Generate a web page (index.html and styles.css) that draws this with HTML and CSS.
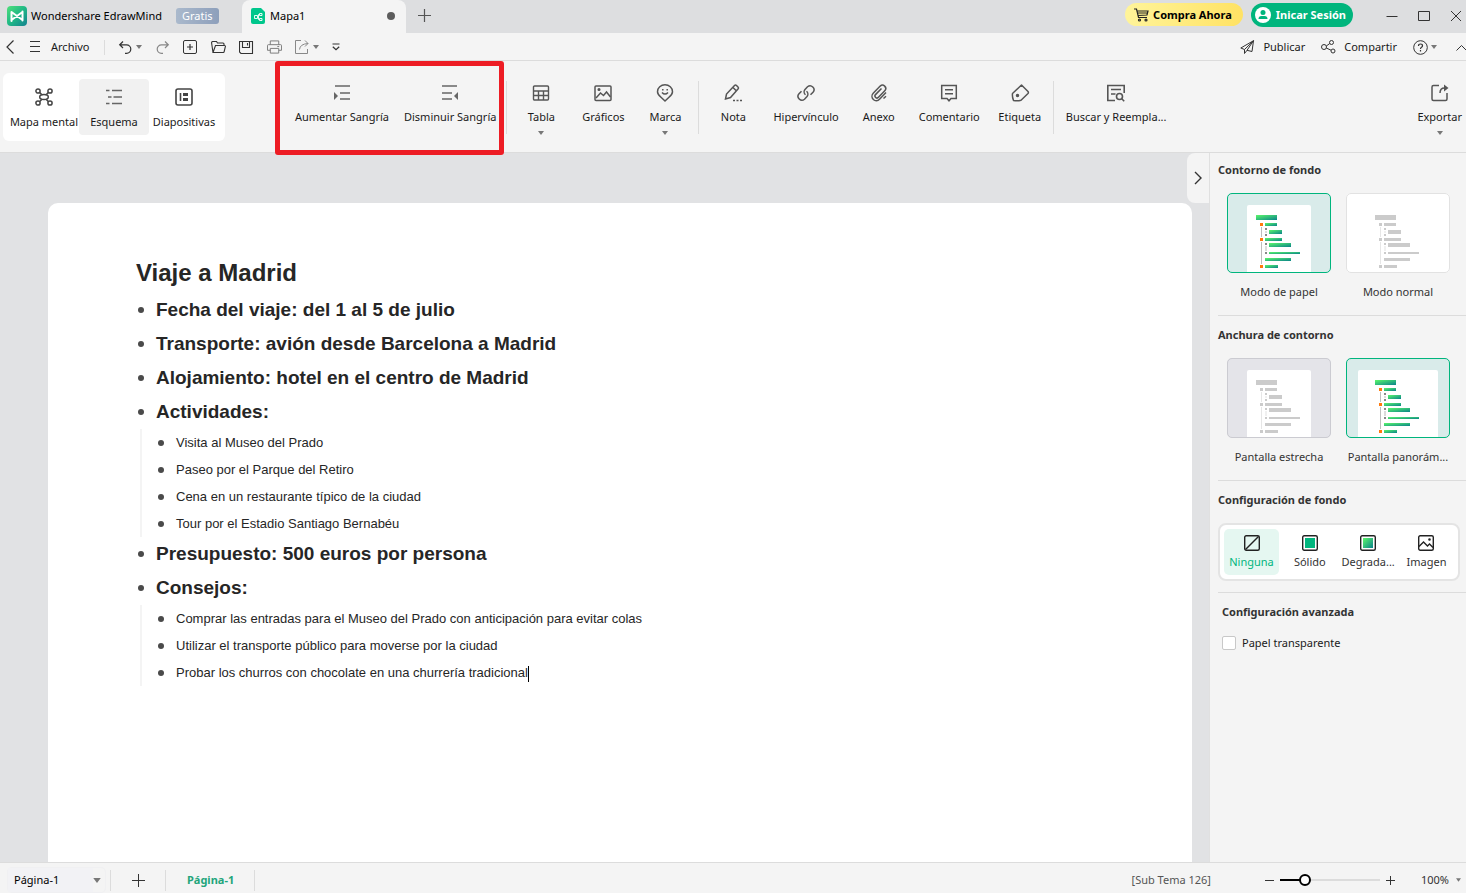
FILE: index.html
```html
<!DOCTYPE html>
<html lang="es">
<head>
<meta charset="utf-8">
<title>Wondershare EdrawMind</title>
<link rel="stylesheet" href="styles.css">
</head>
<body>
<svg class="defs" aria-hidden="true">
  <defs>
    <linearGradient id="green" x1="0" y1="0" x2="1" y2="1"><stop offset="0" stop-color="#5cf86a"/><stop offset="1" stop-color="#08838a"/></linearGradient>
    <linearGradient id="brand" x1="0" y1="0" x2="1" y2="1"><stop offset="0" stop-color="#4fe07a"/><stop offset=".5" stop-color="#1fb886"/><stop offset="1" stop-color="#12808f"/></linearGradient>
    <symbol id="outline-color" viewBox="0 0 104 80">
      <g fill="#bdbdbd"><path d="M34 34h1v10h-1zM34 49h1v22h-1z"/></g>
      <g fill="#dcdcdc"><path d="M38 38h2v2h-2zM38 53h2v5h-2z"/></g>
      <g fill="#888"><path d="M38 35h2v2h-2zM38 41h2v2h-2zM38 50h2v2h-2zM38 59h2v2h-2z"/></g>
      <g fill="#ff7a0c"><path d="M33 30h3v3h-3zM33 45h3v3h-3zM33 72h3v3h-3z"/></g>
      <g fill="url(#green)"><rect x="29" y="22" width="21" height="5"/><rect x="38" y="30" width="12" height="3"/><rect x="42" y="37" width="13" height="4"/><rect x="38" y="45" width="17" height="3"/><rect x="42" y="50" width="22" height="4"/><rect x="42" y="59" width="31" height="2"/><rect x="38" y="65" width="26" height="3"/><rect x="38" y="72" width="13" height="3"/></g>
    </symbol>
    <symbol id="outline-gray" viewBox="0 0 104 80">
      <g fill="#e6e6e6"><path d="M34 34h1v10h-1zM34 49h1v22h-1z"/></g>
      <g fill="#f0f0f0"><path d="M38 38h2v2h-2zM38 53h2v5h-2z"/></g>
      <g fill="#cbcbcb"><path d="M38 35h2v2h-2zM38 41h2v2h-2zM38 50h2v2h-2zM38 59h2v2h-2zM33 30h3v3h-3zM33 45h3v3h-3zM33 72h3v3h-3z"/><rect x="29" y="22" width="21" height="5"/><rect x="38" y="30" width="12" height="3"/><rect x="42" y="37" width="13" height="4"/><rect x="38" y="45" width="17" height="3"/><rect x="42" y="50" width="22" height="4"/><rect x="42" y="59" width="31" height="2"/><rect x="38" y="65" width="26" height="3"/><rect x="38" y="72" width="13" height="3"/></g>
    </symbol>
    <symbol id="caret" viewBox="0 0 6 4"><path d="M0 0h6L3 4z" fill="#777"/></symbol>
  </defs>
</svg>

<header class="titlebar">
  <div class="brand">
    <svg class="logo" viewBox="0 0 20 20"><rect width="20" height="20" rx="4" fill="url(#brand)"/><path d="M4.500 15V6L15.500 14V5.500M15.500 14.500V6L4.500 14" fill="none" stroke="#fff" stroke-width="2" stroke-linejoin="round" stroke-linecap="round"/></svg>
    <span>Wondershare EdrawMind</span>
    <span class="plan">Gratis</span>
  </div>
  <div class="doc-tab">
    <svg class="doc-icon" viewBox="0 0 14 16"><path d="M2 0h8l4 4v10a2 2 0 0 1-2 2H2a2 2 0 0 1-2-2V2a2 2 0 0 1 2-2z" fill="#00c78c"/><path d="M3.500 7.500h3v3h-3zM8.500 5.500h2.500v2H8.500zM8.500 10.500h2.500v2H8.500zM8.500 6.500h-1v5h1" fill="none" stroke="#fff" stroke-width=".9"/></svg>
    <span>Mapa1</span>
    <i class="unsaved"></i>
  </div>
  <button class="plain new-tab" aria-label="Nueva pestaña"><svg width="13" height="13" viewBox="0 0 13 13"><path d="M6.500 0v13M0 6.500h13" stroke="#555" stroke-width="1.200"/></svg></button>
  <div class="spacer"></div>
  <button class="pill buy"><svg width="15" height="14" viewBox="0 0 15 14" fill="none" stroke="#222" stroke-width="1.200"><path d="M0 1h2.500l2 8.500H13M3 3h11l-1 4-9 .5M4 5h9.500"/><circle cx="5.500" cy="12" r="1"/><circle cx="12" cy="12" r="1"/></svg>Compra Ahora</button>
  <button class="pill login"><svg width="16" height="16" viewBox="0 0 16 16"><circle cx="8" cy="8" r="8" fill="#fff"/><circle cx="8" cy="5.500" r="2.500" fill="#00b57d"/><path d="M3.500 12q0-3 3-3h3q3 0 3 3z" fill="#00b57d"/></svg>Inicar Sesión</button>
  <div class="window-controls">
    <button class="plain" aria-label="Minimizar"><svg width="12" height="12" viewBox="0 0 12 12"><path d="M.5 6.500h11" stroke="#333"/></svg></button>
    <button class="plain" aria-label="Maximizar"><svg width="12" height="12" viewBox="0 0 12 12"><path d="M.5 1.500h11v9H.5z" fill="none" stroke="#333"/></svg></button>
    <button class="plain" aria-label="Cerrar"><svg width="12" height="12" viewBox="0 0 12 12"><path d="M1 1l10 10M11 1L1 11" stroke="#333"/></svg></button>
  </div>
</header>

<nav class="menubar">
  <button class="plain" aria-label="Atrás"><svg width="8" height="14" viewBox="0 0 8 14"><path d="M7.500.5L1 7l6.500 6.500" fill="none" stroke="#333" stroke-width="1.200"/></svg></button>
  <button class="plain file"><svg width="10" height="12" viewBox="0 0 10 12"><path d="M0 .5h10M0 5.500h10M0 10.500h10" stroke="#333"/></svg>Archivo</button>
  <i class="rule"></i>
  <div class="quick">
    <button class="plain" aria-label="Deshacer"><svg width="15" height="13" viewBox="0 0 13 13"><path d="M4 .5L.7 3.800 4 7M1 3.800h6.500a4.300 4.300 0 0 1 0 8.600H6" fill="none" stroke="#333" stroke-width="1.200"/></svg><svg width="6" height="4"><use href="#caret"/></svg></button>
    <button class="plain" aria-label="Rehacer"><svg width="15" height="13" viewBox="0 0 13 13"><path d="M9 .5l3.300 3.300L9 7M12 3.800H5.500a4.300 4.300 0 0 0 0 8.600H7" fill="none" stroke="#888" stroke-width="1.200"/></svg></button>
    <button class="plain" aria-label="Nuevo"><svg width="15" height="14" viewBox="0 0 15 14"><rect x=".5" y=".5" width="13" height="13" rx="1.500" fill="none" stroke="#333"/><path d="M7 4v6M4 7h6" stroke="#333" stroke-width="1.200"/></svg></button>
    <button class="plain" aria-label="Abrir"><svg width="15" height="12" viewBox="0 0 15 12"><path d="M2 11.500L.6 2Q.5.500 2 .5h3.500l1 1.500H12q1 0 1 1v1M2 11.500L4.500 4.500h9q1 0 .9 1l-1.200 5q-.3 1-1.200 1z" fill="none" stroke="#333" stroke-width="1.100"/></svg></button>
    <button class="plain" aria-label="Guardar"><svg width="15" height="13" viewBox="0 0 15 13"><path d="M.5.500h13v12H2l-1.500-1.500zM3.500.5v6h7v-6M8.500 2v2.500" fill="none" stroke="#333" stroke-width="1.100"/></svg></button>
    <button class="plain" aria-label="Imprimir"><svg width="15" height="14" viewBox="0 0 16 14"><path d="M3.500 4.500v-4h9v4M3.500 10.500H.5v-5q0-1 1-1h13q1 0 1 1v5h-3M3.500 8.500h9v5h-9zM11 6.500h2" fill="none" stroke="#777"/></svg></button>
    <button class="plain" aria-label="Enviar"><svg width="15" height="14" viewBox="0 0 15 14"><path d="M6 .5H.5v13h12V9M4.500 9.500Q5 4 13 3.500M10 .5l3 3-3 3" fill="none" stroke="#888"/></svg><svg width="6" height="4"><use href="#caret"/></svg></button>
    <button class="plain" aria-label="Más"><svg width="8" height="8" viewBox="0 0 8 8"><path d="M.5 1h7M.8 3.800L4 6.800l3.200-3" fill="none" stroke="#333" stroke-width="1.200"/></svg></button>
  </div>
  <div class="spacer"></div>
  <button class="plain share"><svg width="15" height="14" viewBox="0 0 15 14"><path d="M13.500.7L.8 8l3.700 1.500L13.500.7 12 11.500 7 10.300M4.500 9.500v4L7 10.300l6.500-9.600" fill="none" stroke="#333"/></svg>Publicar</button>
  <button class="plain share"><svg width="15" height="14" viewBox="0 0 15 14" fill="none" stroke="#333"><circle cx="3" cy="7" r="2.500"/><circle cx="10.500" cy="2.500" r="2"/><circle cx="12" cy="11" r="2"/><path d="M5.300 6l3.500-2.500M5.300 8l4.700 2.200"/></svg>Compartir</button>
  <button class="plain help" aria-label="Ayuda"><svg width="15" height="15" viewBox="0 0 15 15" fill="none" stroke="#333"><circle cx="7.500" cy="7.500" r="6.800"/><path d="M5.500 6q0-2 2-2t2 1.800q0 1-1 1.500t-1 1.700M7.500 10v1.500" stroke-width="1.200"/></svg><svg width="6" height="4"><use href="#caret"/></svg></button>
  <button class="plain collapse" aria-label="Contraer"><svg width="11" height="7" viewBox="0 0 11 7"><path d="M.5 6.500l5-5 5 5" fill="none" stroke="#333"/></svg></button>
</nav>

<section class="ribbon">
  <div class="modes">
    <button class="mode"><svg width="20" height="20" viewBox="0 0 20 20" fill="none" stroke="#444" stroke-width="1.500"><ellipse cx="10" cy="10" rx="4.300" ry="2.500"/><circle cx="4" cy="4" r="2.100"/><circle cx="16" cy="4" r="2.100"/><circle cx="4" cy="16" r="2.100"/><circle cx="16" cy="16" r="2.100"/><path d="M5.700 5.500l2 2M14.300 5.500l-2 2M5.700 14.500l2-2M14.300 14.500l-2-2"/></svg>Mapa mental</button>
    <button class="mode active"><svg width="20" height="20" viewBox="0 0 20 20" fill="none" stroke="#666" stroke-width="1.600"><path d="M2 3.500h3.500M8 3.500h10M4 10h3.500M9.500 10H18M2 16.500h3.500M8 16.500h10"/></svg>Esquema</button>
    <button class="mode"><svg width="20" height="20" viewBox="0 0 20 20" fill="none" stroke="#444" stroke-width="1.600"><rect x="2" y="2" width="16" height="16" rx="2"/><path d="M6.500 6v8"/><path d="M9 6h5v3H9zM9 11h5v3H9z" fill="#444" stroke="none"/></svg>Diapositivas</button>
  </div>
  <div class="tools">
    <div class="highlighted">
      <button class="tool"><svg width="20" height="20" viewBox="0 0 20 20"><path d="M3 3h15M8 10h10M8 16h10" stroke="#666" stroke-width="1.600"/><path d="M2 9v8l4-4z" fill="#666"/></svg>Aumentar Sangría</button>
      <button class="tool"><svg width="20" height="20" viewBox="0 0 20 20"><path d="M2 3h15M2 10h10M2 16h10" stroke="#666" stroke-width="1.600"/><path d="M18 9v8l-4-4z" fill="#666"/></svg>Disminuir Sangría</button>
    </div>
    <i class="rule"></i>
    <button class="tool"><svg width="20" height="20" viewBox="0 0 20 20" fill="none" stroke="#555" stroke-width="1.400"><rect x="2.500" y="3" width="15" height="14" rx="1"/><path d="M2.500 8h15M2.500 12.500h15M7.500 8v9M12.500 8v9"/></svg>Tabla<svg width="6" height="4"><use href="#caret"/></svg></button>
    <button class="tool"><svg width="20" height="20" viewBox="0 0 20 20" fill="none" stroke="#555" stroke-width="1.500"><rect x="2" y="3" width="16" height="14.500" rx="1"/><path d="M3 15l4.500-5 3 2.500 3-3.500 4 5"/><circle cx="6" cy="6.500" r=".8" fill="#555"/></svg>Gráficos</button>
    <button class="tool"><svg width="20" height="20" viewBox="0 0 20 20" fill="none" stroke="#555" stroke-width="1.500"><path d="M10 18l-4-3.700C3.500 12 2.500 11 2.500 8.700a7.500 6.900 0 0 1 15 0c0 2.300-1 3.300-3.500 5.600zM7 9.500q3 3.200 6 0M7.800 6v1.500M12.200 6v1.500"/></svg>Marca<svg width="6" height="4"><use href="#caret"/></svg></button>
    <i class="rule"></i>
    <button class="tool"><svg width="20" height="20" viewBox="0 0 20 20" fill="none" stroke="#555" stroke-width="1.500"><path d="M2.500 16l1-5 8-8.500q1-1 2 0l1.500 1.500q1 1 0 2L7.500 14.500zM10 4.500l3.500 3.500"/><path d="M10 17.500h2M13.500 17.500h2M17 17.500h2"/></svg>Nota</button>
    <button class="tool"><svg width="20" height="20" viewBox="0 0 20 20" fill="none" stroke="#555" stroke-width="1.500"><path d="M9.500 11.800A3.800 3.800 0 0 1 9 6.500L11.500 3.800a3.900 3.900 0 0 1 5.500 5.500L14.500 11.800M10.500 8.200a3.800 3.800 0 0 1 .5 5.300L8.500 16.200A3.900 3.900 0 0 1 3 10.700L5.500 8.200"/></svg>Hipervínculo</button>
    <button class="tool"><svg width="20" height="20" viewBox="0 0 20 20" fill="none" stroke="#555" stroke-width="1.500"><path d="M17 9.500l-6.500 6.800a4.300 4.300 0 0 1-6.300-6l7-7.200a3.300 3.300 0 0 1 4.800 4.500L9.500 14.300a2 2 0 0 1-3-2.700L12.500 5.500M14.500 15.500l2.500-2.300"/></svg>Anexo</button>
    <button class="tool"><svg width="20" height="20" viewBox="0 0 20 20" fill="none" stroke="#555" stroke-width="1.500"><path d="M2.700 2.500h14.600v13H12L10 17.800 8 15.500H2.700zM6 6.700h8M6 10.700h8"/></svg>Comentario</button>
    <button class="tool"><svg width="20" height="20" viewBox="0 0 20 20" fill="none" stroke="#555" stroke-width="1.500"><path d="M11.500 2L18 8.500q.8 1 0 2L11 17.300q-3.500 1-7.500.2-1.500-4-1-7z" stroke-linejoin="round"/><circle cx="7.500" cy="12.500" r="1" fill="#555"/></svg>Etiqueta</button>
    <i class="rule"></i>
    <button class="tool"><svg width="20" height="20" viewBox="0 0 20 20" fill="none" stroke="#555" stroke-width="1.600"><path d="M9 17.500H1.800v-15h16.400V10M5 6.500h10M5 11h4.500"/><circle cx="13.500" cy="13.500" r="3"/><path d="M15.800 15.800l2.400 2.400"/></svg>Buscar y Reempla...</button>
  </div>
  <div class="spacer"></div>
  <button class="tool export"><svg width="20" height="20" viewBox="0 0 20 20" fill="none" stroke="#555" stroke-width="1.500"><path d="M9 2.500H3.500q-1.500 0-1.500 1.500v12q0 1.500 1.500 1.500h12q1.500 0 1.500-1.500V10M10 10q0-5 4.500-5"/><path d="M14 1.500L18.500 5 14 8.500z" fill="#555" stroke="none"/></svg>Exportar<svg width="6" height="4"><use href="#caret"/></svg></button>
</section>

<main class="workspace">
  <div class="canvas">
    <article class="paper">
      <h1>Viaje a Madrid</h1>
      <ul class="topics">
        <li>Fecha del viaje: del 1 al 5 de julio</li>
        <li>Transporte: avión desde Barcelona a Madrid</li>
        <li>Alojamiento: hotel en el centro de Madrid</li>
        <li>Actividades:
          <ul class="subtopics">
            <li>Visita al Museo del Prado</li>
            <li>Paseo por el Parque del Retiro</li>
            <li>Cena en un restaurante típico de la ciudad</li>
            <li>Tour por el Estadio Santiago Bernabéu</li>
          </ul>
        </li>
        <li>Presupuesto: 500 euros por persona</li>
        <li>Consejos:
          <ul class="subtopics">
            <li>Comprar las entradas para el Museo del Prado con anticipación para evitar colas</li>
            <li>Utilizar el transporte público para moverse por la ciudad</li>
            <li>Probar los churros con chocolate en una churrería tradicional<i class="text-cursor"></i></li>
          </ul>
        </li>
      </ul>
    </article>
    <button class="plain panel-toggle" aria-label="Ocultar panel"><svg width="8" height="14" viewBox="0 0 8 14"><path d="M1 1l6 6-6 6" fill="none" stroke="#333" stroke-width="1.400"/></svg></button>
  </div>
  <aside class="panel">
    <section class="group">
      <h2>Contorno de fondo</h2>
      <div class="options">
        <button class="option"><svg class="thumb tinted" viewBox="0 0 104 80"><path d="M20 80V14a2 2 0 0 1 2-2h60a2 2 0 0 1 2 2v66z" fill="#fff"/><use href="#outline-color"/></svg>Modo de papel</button>
        <button class="option"><svg class="thumb" viewBox="0 0 104 80"><use href="#outline-gray"/></svg>Modo normal</button>
      </div>
    </section>
    <section class="group">
      <h2>Anchura de contorno</h2>
      <div class="options">
        <button class="option"><svg class="thumb muted" viewBox="0 0 104 80"><path d="M20 80V14a2 2 0 0 1 2-2h60a2 2 0 0 1 2 2v66z" fill="#fff"/><use href="#outline-gray"/></svg>Pantalla estrecha</button>
        <button class="option"><svg class="thumb tinted" viewBox="0 0 104 80"><path d="M12 80V14a2 2 0 0 1 2-2h76a2 2 0 0 1 2 2v66z" fill="#fff"/><use href="#outline-color"/></svg>Pantalla panorám...</button>
      </div>
    </section>
    <section class="group backgrounds">
      <h2>Configuración de fondo</h2>
      <div class="fills">
        <button class="fill active"><svg width="16" height="16" viewBox="0 0 16 16" fill="none" stroke="#222" stroke-width="1.400"><rect x=".7" y=".7" width="14.600" height="14.600" rx="1.500"/><path d="M1.500 14.500l13-13"/></svg>Ninguna</button>
        <button class="fill"><svg width="16" height="16" viewBox="0 0 16 16"><rect x=".7" y=".7" width="14.600" height="14.600" rx="1.500" fill="none" stroke="#222" stroke-width="1.400"/><rect x="3" y="3" width="10" height="10" fill="#00b57d"/></svg>Sólido</button>
        <button class="fill"><svg width="16" height="16" viewBox="0 0 16 16"><rect x=".7" y=".7" width="14.600" height="14.600" rx="1.500" fill="none" stroke="#222" stroke-width="1.400"/><rect x="3" y="3" width="10" height="10" fill="url(#green)"/></svg>Degrada...</button>
        <button class="fill"><svg width="16" height="16" viewBox="0 0 16 16" fill="none" stroke="#222" stroke-width="1.400"><rect x=".7" y=".7" width="14.600" height="14.600" rx="1.500"/><path d="M1 11.500L5.500 7l4 4 2-2 3.500 3.500"/><circle cx="11.500" cy="4.500" r=".6"/></svg>Imagen</button>
      </div>
    </section>
    <section class="group advanced">
      <h2>Configuración avanzada</h2>
      <label class="check"><input type="checkbox">Papel transparente</label>
    </section>
  </aside>
</main>

<footer class="statusbar">
  <div class="page-select">
    <select aria-label="Página"><option>Página-1</option></select>
    <svg width="8" height="5"><use href="#caret"/></svg>
  </div>
  <i class="rule"></i>
  <button class="plain add-page" aria-label="Añadir página"><svg width="13" height="13" viewBox="0 0 13 13"><path d="M6.500 0v13M0 6.500h13" stroke="#333"/></svg></button>
  <i class="rule"></i>
  <button class="plain page-tab">Página-1</button>
  <i class="rule"></i>
  <div class="spacer"></div>
  <span class="status">[Sub Tema 126]</span>
  <div class="zoom">
    <button class="plain" aria-label="Reducir"><svg width="9" height="9" viewBox="0 0 9 9"><path d="M0 4.500h9" stroke="#333"/></svg></button>
    <input type="range" min="0" max="100" value="22" aria-label="Zoom">
    <button class="plain" aria-label="Ampliar"><svg width="9" height="9" viewBox="0 0 9 9"><path d="M4.500 0v9M0 4.500h9" stroke="#333"/></svg></button>
  </div>
  <button class="plain percent">100%<svg width="5" height="4"><use href="#caret"/></svg></button>
</footer>
</body>
</html>
```
FILE: styles.css
```css
* { box-sizing: border-box; }

body {
  margin: 0;
  height: 100vh;
  display: flex;
  flex-direction: column;
  overflow: hidden;
  background: #f4f4f4;
  color: #1a1a1a;
  font: 11px/16px "Noto Sans", "Open Sans", sans-serif;
}

button, select, input { font: inherit; color: inherit; }
button { border: 0; padding: 0; background: none; white-space: nowrap; }
svg { flex: none; display: block; }
.defs { position: absolute; width: 0; height: 0; }
.plain { display: flex; align-items: center; }
.spacer { flex: 1; }
.rule { flex: none; width: 1px; background: #dcdcdc; }

/* Title bar */
.titlebar { flex: none; height: 33px; display: flex; background: #dddee0; }
.brand { width: 242px; padding: 0 0 2px 7px; display: flex; align-items: center; gap: 4px; color: #000; white-space: nowrap; }
.logo { width: 20px; height: 20px; }
.plan { margin-left: 10px; padding: 0 6px; border-radius: 3px; background: linear-gradient(90deg, #aab9cc, #8d9fbb); color: #fff; }
.doc-tab { width: 164px; padding: 0 11px 2px 9px; display: flex; align-items: center; gap: 5px; background: #f4f4f4; border-radius: 8px 8px 0 0; color: #000; }
.doc-icon { width: 14px; height: 16px; }
.unsaved { margin-left: auto; width: 8px; height: 8px; border-radius: 50%; background: #5c5c5c; }
.new-tab { padding: 0 12px 3px; }
.pill { align-self: flex-start; display: flex; align-items: center; border-radius: 12px; font-weight: 700; }
.buy { height: 23px; margin: 3px 8px 0 0; padding: 0 11px 0 9px; gap: 4px; background: linear-gradient(90deg, #fff49a, #ffe264); color: #000; }
.login { height: 24px; margin-top: 3px; padding: 0 7px 0 4px; gap: 5px; background: #00b57d; color: #fff; }
.window-controls { display: flex; gap: 20px; margin: 0 4px 2px 33px; }

/* Menu bar */
.menubar { flex: none; height: 28px; padding: 1px 0 0 6px; display: flex; align-items: center; border-bottom: 1px solid #dcdcdc; white-space: nowrap; }
.menubar .rule { height: 15px; margin: 0 13px 0 14px; }
.file { margin-left: 16px; gap: 11px; }
.quick { display: flex; align-items: center; gap: 13px; }
.quick .plain { gap: 3px; }
.share { gap: 8px; margin-right: 16px; }
.help { gap: 3px; margin-right: 19px; }
.collapse { margin-right: -1px; }

/* Ribbon */
.ribbon { flex: none; height: 92px; padding-left: 3px; display: flex; border-bottom: 1px solid #dcdcdc; }
.modes { align-self: flex-start; margin-top: 12px; padding: 6px; display: flex; background: #fff; border-radius: 6px; }
.mode { width: 70px; height: 56px; padding-top: 8px; display: flex; flex-direction: column; align-items: center; gap: 7px; border-radius: 4px; }
.mode.active { background: #f1f1f1; }
.tools { display: flex; margin-left: 50px; }
.tools .rule { height: 53px; margin: 20px 3px 0 2px; }
.highlighted { z-index: 1; display: flex; gap: 15px; height: 94px; padding: 0 3px 0 15px; border: 5px solid #ed1c24; border-radius: 3px; }
.tool { min-width: 62px; padding: 22px 9px 0; display: flex; flex-direction: column; align-items: center; gap: 6px; }
.highlighted .tool { padding: 17px 0 0; }
.export { min-width: 0; padding: 22px 4px 0; }

/* Workspace */
.workspace { flex: 1; min-height: 0; display: flex; }
.canvas { flex: 1; min-width: 0; padding: 50px 17px 0 48px; display: flex; background: #e1e2e4; position: relative; }
.paper { flex: 1; padding: 54px 88px 0; background: #fff; border-radius: 10px 10px 0 0; color: #262626; font-family: "Liberation Sans", Arial, sans-serif; }
.paper h1 { margin: 0 0 4px; font-size: 24px; line-height: 32px; }
.paper ul { margin: 0; padding: 0; list-style: none; }
.topics > li { position: relative; padding-left: 20px; font-size: 19px; font-weight: 700; line-height: 34px; }
.topics li::before { content: ""; position: absolute; left: 2px; top: 14px; width: 6px; height: 6px; border-radius: 50%; background: #4a4a4a; }
.paper .subtopics { margin-left: -16px; border-left: 2px solid #f4f4f4; }
.subtopics li { position: relative; padding-left: 34px; font-size: 13px; font-weight: 400; line-height: 27px; }
.topics .subtopics li::before { left: 16px; top: 11px; }
.text-cursor { display: inline-block; width: 1px; height: 16px; background: #000; vertical-align: middle; }
.panel-toggle { position: absolute; top: 0; right: 0; width: 22px; height: 50px; justify-content: center; background: #f4f4f4; border-radius: 8px 0 0 8px; }

/* Side panel */
.panel { flex: none; width: 257px; padding-left: 8px; border-left: 1px solid #e0e0e0; color: #333; }
.group { padding: 11px 6px 15px 0; border-bottom: 1px solid #dcdcdc; }
.group:first-child { padding-top: 9px; }
.group h2 { margin: 0 0 15px; font-size: 11px; line-height: 16px; font-weight: 700; }
.options { display: flex; justify-content: center; gap: 15px; padding-right: 1px; }
.option { width: 104px; display: flex; flex-direction: column; align-items: center; gap: 11px; }
.thumb { width: 104px; height: 80px; border-radius: 5px; background: #fff; outline: 1px solid #e2e2e2; outline-offset: -1px; }
.thumb.tinted { background: #d9ebea; outline-color: #00b57d; }
.thumb.muted { background: #e4e4e9; outline-color: #cbcbd1; }
.group.backgrounds { padding-bottom: 11px; }
.fills { display: flex; justify-content: space-between; padding: 4px; background: #fff; border: 2px solid #e4e4e4; border-radius: 8px; }
.fill { width: 55px; height: 46px; display: flex; flex-direction: column; align-items: center; justify-content: center; gap: 3px; border-radius: 5px; }
.fill.active { background: #e5f7f1; color: #00b57d; }
.group.advanced { padding-left: 4px; border-bottom: 0; }
.check { display: flex; align-items: center; gap: 6px; color: #1a1a1a; }
.check input { appearance: none; width: 14px; height: 14px; margin: 0; border: 1px solid #c8c8c8; border-radius: 2px; background: #fff; }

/* Status bar */
.statusbar { flex: none; height: 31px; padding: 4px 5px 0 7px; display: flex; align-items: center; border-top: 1px solid #dcdcdc; white-space: nowrap; }
.statusbar .rule { height: 21px; }
.page-select { width: 99px; height: 26px; margin-right: 4px; padding-right: 4px; display: flex; align-items: center; border: 1px solid #f0f0f2; border-radius: 5px; }
.page-select select { flex: 1; height: 24px; appearance: none; border: 0; padding: 0 6px; background: #f2f2f5; color: #000; }
.add-page { padding: 0 20px 0 21px; }
.page-tab { padding: 0 20px 0 21px; color: #22a57b; font-weight: 700; }
.status { margin-right: 54px; color: #555; }
.zoom { display: flex; align-items: center; gap: 6px; }
.zoom input { appearance: none; width: 100px; height: 12px; margin: 0; background: linear-gradient(90deg, #000 25%, #dcdcdc 25%) center / 100% 2px no-repeat; }
.zoom input::-webkit-slider-thumb { appearance: none; width: 12px; height: 12px; border: 2px solid #000; border-radius: 50%; background: #fff; }
.percent { margin-left: 26px; gap: 7px; color: #333; }
```
